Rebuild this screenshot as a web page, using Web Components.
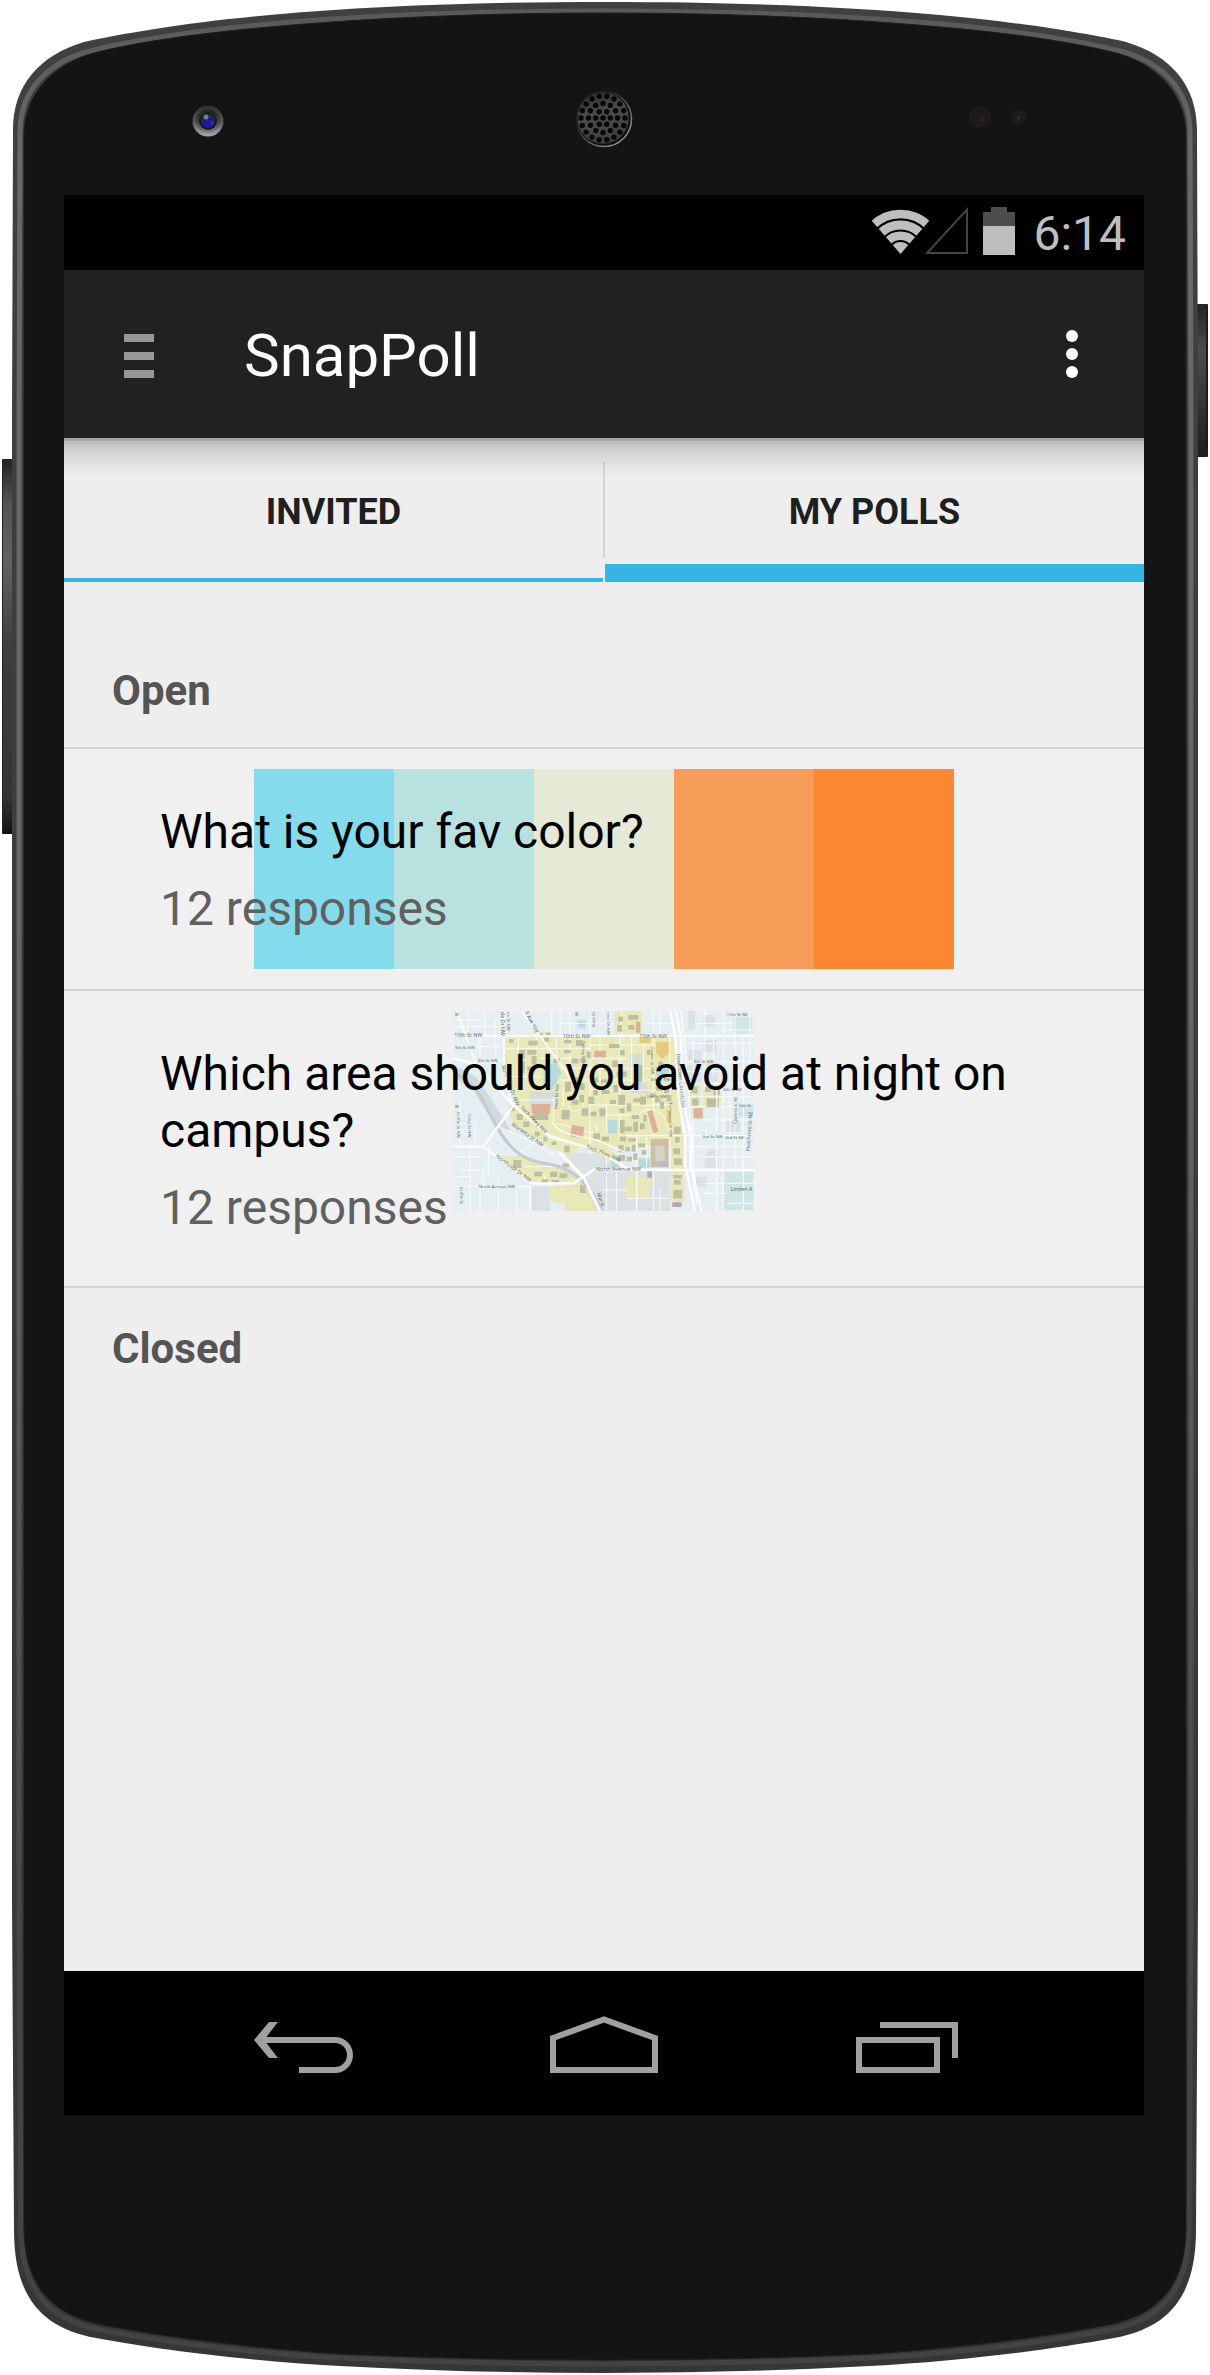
<!DOCTYPE html>
<html lang="en">
<head>
<meta charset="utf-8">
<meta name="viewport" content="width=device-width, initial-scale=1">
<title>SnapPoll</title>
<style>
html, body { margin: 0; background: #fff; }
body { font-family: Roboto, "Noto Sans", sans-serif; }
</style>
</head>
<body>
<phone-frame>
  <status-bar time="6:14"></status-bar>
  <action-bar>SnapPoll</action-bar>
  <tab-strip>
    <tab-item>INVITED</tab-item>
    <tab-item selected>MY POLLS</tab-item>
  </tab-strip>
  <poll-list>
    <poll-group heading="Open">
      <poll-card responses="12">What is your fav color?<color-strip slot="art"></color-strip></poll-card>
      <poll-card responses="12">Which area should you avoid at night on campus?<campus-map slot="art"></campus-map></poll-card>
    </poll-group>
    <poll-group heading="Closed"></poll-group>
  </poll-list>
  <nav-bar></nav-bar>
</phone-frame>

<script>
function define(name, html, setup) {
  customElements.define(name, class extends HTMLElement {
    constructor() {
      super();
      this.attachShadow({ mode: "open" }).innerHTML = html;
    }
    connectedCallback() { if (setup) setup(this, this.shadowRoot); }
  });
}

/* Phone body: bezel, camera, speaker, sensors, side keys */
define("phone-frame", `
<style>
:host { display: grid; grid-template-rows: 195px 1fr 260px; grid-template-columns: minmax(0, 1fr); min-height: 100vh; position: relative; isolation: isolate; }
.body { position: absolute; inset: 0; width: 100%; height: 100%; z-index: -1; }
.top { display: grid; grid-template-columns: 1fr auto 1fr; align-items: center; padding: 41px 182px 0 180px; height: 154px; }
.top svg { display: block; align-self: start; }
.camera, .sensors { margin-top: 64px; }
.speaker { margin-top: 48px; }
.sensors { justify-self: end; }
.screen { display: flex; flex-direction: column; margin: 0 66px 0 64px; background: #eee; min-width: 0; }
</style>
<svg class="body" viewBox="0 0 1210 2375" preserveAspectRatio="none" aria-hidden="true">
  <defs>
    <linearGradient id="rim" x1="0" y1="0" x2="0" y2="1">
      <stop offset="0" stop-color="#404042"/><stop offset=".85" stop-color="#38383a"/><stop offset="1" stop-color="#363637"/>
    </linearGradient>
    <linearGradient id="glint" x1="0" y1="0" x2="0" y2="1">
      <stop offset="0" stop-color="#59595d"/><stop offset=".06" stop-color="#68686c"/><stop offset=".4" stop-color="#67676b"/><stop offset=".85" stop-color="#454547"/><stop offset="1" stop-color="#434344"/>
    </linearGradient>
    <linearGradient id="key" x1="0" y1="0" x2="0" y2="1">
      <stop offset="0" stop-color="#222"/><stop offset=".12" stop-color="#555"/><stop offset=".28" stop-color="#626262"/><stop offset=".5" stop-color="#3e3e3e"/><stop offset=".9" stop-color="#343434"/><stop offset="1" stop-color="#111"/>
    </linearGradient>
    <linearGradient id="key2" x1="0" y1="0" x2="0" y2="1">
      <stop offset="0" stop-color="#222"/><stop offset=".3" stop-color="#4c4c4c"/><stop offset=".6" stop-color="#383838"/><stop offset="1" stop-color="#1c1c1c"/>
    </linearGradient>
  </defs>
  <rect x="2" y="459" width="12" height="375" rx="1" fill="url(#key)"/>
  <path d="M2.500 460V833" stroke="#222"/>
  <rect x="1196" y="304" width="12" height="153" rx="1" fill="url(#key2)"/>
  <path d="M1207 305V456" stroke="#1c1c1c" stroke-width="2"/>
  <path fill="url(#rim)" d="M605 2C480 2 370 6 270 15C190 22 120 34 84 42C40 55 13 85 13 130L12 420V1900L14 2230C14 2295 40 2328 96 2338C160 2350 250 2361 340 2366Q470 2373 605 2373Q740 2373 870 2366C960 2361 1050 2350 1114 2338C1170 2328 1196 2295 1196 2230L1198 1900V420L1197 130C1197 85 1170 55 1126 42C1090 34 1020 22 940 15C840 6 730 2 605 2Z"/>
  <path fill="none" stroke="url(#glint)" stroke-width="5" d="M605 11C480 11 370 15 270 24C190 31 125 42 94 50C48 61 20 90 20 132L19 420V1900L21 2228C21 2286 45 2319 100 2330C165 2342 250 2353 340 2358Q470 2364 605 2364Q740 2364 870 2358C960 2353 1045 2342 1110 2330C1165 2319 1189 2286 1189 2228L1191 1900V420L1190 132C1190 90 1162 61 1116 50C1085 42 1020 31 940 24C840 15 730 11 605 11Z"/>
  <path fill="#141414" stroke="#1d1d1e" stroke-width="1" d="M605 13C480 13 370 18 270 27C190 34 135 43 98 52C52 63 24 95 24 136V2226C24 2282 48 2314 102 2325C165 2337 250 2348 340 2354Q470 2360 605 2360Q740 2360 870 2354C960 2348 1045 2337 1108 2325C1162 2314 1186 2282 1186 2226V136C1186 95 1158 63 1112 52C1075 43 1020 34 940 27C840 18 730 13 605 13Z"/>
</svg>
<div class="top" aria-hidden="true">
  <svg class="camera" width="56" height="32" viewBox="-28 -16 56 32">
    <defs>
      <linearGradient id="ring" x1="0" y1="0" x2="0" y2="1"><stop offset="0" stop-color="#2c2c2c"/><stop offset=".5" stop-color="#555"/><stop offset="1" stop-color="#a8a8a8"/></linearGradient>
      <radialGradient id="lens" cx=".5" cy=".75" r=".7"><stop offset="0" stop-color="#1a0fe0"/><stop offset=".5" stop-color="#1a1a86"/><stop offset="1" stop-color="#24303c"/></radialGradient>
    </defs>
    <circle r="15.500" fill="url(#ring)"/><circle r="11.500" fill="#242424"/><circle r="11" cy="1" fill="url(#ring)" opacity=".7"/><circle r="9" fill="#1a1a1a"/><circle r="7" fill="url(#lens)"/><circle cx="-2" cy="-4" r="2.500" fill="#7fa09c" opacity=".75"/><circle cx="4" cy="2" r="2" fill="#7a3a7c" opacity=".5"/>
  </svg>
  <svg class="speaker" width="60" height="60" viewBox="-30 -30 60 60">
    <defs><linearGradient id="mesh" x1="0" y1="0" x2=".3" y2="1"><stop offset="0" stop-color="#2a2a2a"/><stop offset=".5" stop-color="#4c4c4c"/><stop offset="1" stop-color="#404040"/></linearGradient>
    <linearGradient id="lip" x1="0" y1="0" x2="1" y2="1"><stop offset=".3" stop-color="#222"/><stop offset=".8" stop-color="#8a8a8a"/></linearGradient></defs>
    <circle r="28" fill="#0c0c0c"/><circle r="27.500" fill="none" stroke="url(#lip)" stroke-width="1.500"/><circle cx="-1" cy="-1" r="26" fill="url(#mesh)" stroke="#1c1c1c"/>
    <g class="holes" fill="#070707"></g>
  </svg>
  <svg class="sensors" width="60" height="24" viewBox="0 0 60 24"><circle cx="12" cy="12" r="11" fill="#1b1b1b"/><circle cx="51" cy="12" r="8" fill="#1b1b1b"/><path d="M14 11l2 5h-3z" fill="#4a2a1c"/><path d="M51 9l1 5h-3z" fill="#4a2a1c"/></svg>
</div>
<div class="screen"><slot></slot></div>
`, (host, root) => {
  const pts = [[0, 0]];
  [[6, 7.3], [12, 14.5], [18, 22]].forEach(([n, r]) => {
    for (let i = 0; i < n; i++) {
      const a = 2 * Math.PI * i / n;
      pts.push([r * Math.cos(a), r * Math.sin(a)]);
    }
  });
  root.querySelector(".holes").innerHTML = pts.map(([x, y]) => `<circle cx="${(x - 1).toFixed(1)}" cy="${(y - 1).toFixed(1)}" r="2.700"/>`).join("");
});

define("status-bar", `
<style>
:host { display: flex; justify-content: flex-end; align-items: center; height: 75px; background: #000; color: #bebebe; padding-right: 18px; box-sizing: border-box; }
svg { display: block; margin-right: 17px; }
span { font-size: 48px; line-height: 56px; padding-top: 2px; }
</style>
<svg width="146" height="75" viewBox="870 195 146 75" role="img" aria-label="Wi-Fi, no mobile signal, battery">
  <defs><clipPath id="fan"><path d="M900.500 254L865 213V200H936V213Z"/></clipPath></defs>
  <g clip-path="url(#fan)" fill="none" stroke="#bebebe">
    <circle cx="900.500" cy="253.500" r="39.500" stroke-width="8.500"/>
    <circle cx="900.500" cy="253.500" r="28.500" stroke-width="9"/>
    <circle cx="900.500" cy="253.500" r="17.800" stroke-width="8.500"/>
    <circle cx="900.500" cy="253.500" r="5.700" stroke-width="11.500"/>
  </g>
  <path d="M927 253H967V209.500Z" fill="none" stroke="#444" stroke-width="2"/>
  <path d="M983 212h8v-5h16v5h8v14h-32z" fill="#4d4d4d"/>
  <path d="M983 226h32v29h-32z" fill="#bebebe"/>
</svg>
<span></span>
`, (host, root) => { root.querySelector("span").textContent = host.getAttribute("time"); });

define("action-bar", `
<style>
:host { display: flex; align-items: center; height: 168px; background: #212121; color: #fff; position: relative; z-index: 1; }
:host::after { content: ""; position: absolute; left: 0; right: 0; top: 100%; height: 40px; pointer-events: none;
  background: linear-gradient(rgba(0,0,0,.3) 0 3px, rgba(0,0,0,.22) 3px, rgba(0,0,0,.13) 11px, rgba(0,0,0,.07) 22px, rgba(0,0,0,.02) 33px, transparent); }
button { all: unset; display: grid; place-items: center; box-sizing: border-box; height: 168px; }
.menu { width: 150px; padding-top: 4px; }
.more { width: 144px; }
svg { display: block; }
h1 { flex: 1; margin: 0 0 0 30px; padding-top: 4px; font-size: 60px; line-height: 70px; font-weight: 400; }
</style>
<button class="menu" aria-label="Open menu"><svg width="30" height="44" viewBox="0 0 30 44" fill="#979797"><path d="M0 0h30v8H0zM0 18h30v8H0zM0 36h30v8H0z"/></svg></button>
<h1><slot></slot></h1>
<button class="more" aria-label="More options"><svg width="12" height="48" viewBox="0 0 12 48" fill="#fff"><circle cx="6" cy="6" r="6"/><circle cx="6" cy="24" r="6"/><circle cx="6" cy="42" r="6"/></svg></button>
`);

define("tab-strip", `
<style>
:host { display: flex; gap: 2px; background: linear-gradient(#d5d5d5, #d5d5d5) center 24px / 2px 96px no-repeat #eee; }
</style>
<slot></slot>
`, host => host.setAttribute("role", "tablist"));

define("tab-item", `
<style>
:host { display: block; flex: 1; min-width: 0; }
button { all: unset; display: grid; place-items: center; box-sizing: border-box; width: 100%; height: 144px; padding-top: 4px; color: #1f1f1f; font-size: 36px; line-height: 42px; font-weight: 700; background: linear-gradient(#33b5e5, #33b5e5) bottom / 100% 4px no-repeat; }
:host([selected]) button { background-size: 100% 18px; }
</style>
<button role="tab"><slot></slot></button>
`, (host, root) => root.querySelector("button").setAttribute("aria-selected", host.hasAttribute("selected")));

define("poll-list", `
<style>:host { display: block; flex: 1; padding-top: 48px; background: #eee; }</style>
<slot></slot>
`);

define("poll-group", `
<style>
:host { display: block; }
h2 { margin: 0; padding: 36px 48px 31px; font-size: 42px; line-height: 50px; font-weight: 700; color: #555; }
</style>
<h2></h2><slot></slot>
`, (host, root) => { root.querySelector("h2").textContent = host.getAttribute("heading"); });

/* A poll row: artwork lies behind the question and the response count */
define("poll-card", `
<style>
:host { display: block; border-top: 2px solid #d3d3d3; background: #f0f0f0; }
:host(:last-of-type) { border-bottom: 2px solid #d3d3d3; }
a { display: grid; min-height: 240px; color: #000; text-decoration: none; font-size: 48px; line-height: 57px; }
.art { grid-area: 1 / 1; justify-self: center; padding-top: 20px; }
.text { grid-area: 1 / 1; padding: 54px 96px 50px; position: relative; display: flex; flex-direction: column; gap: 20px; }
.count { color: #606060; }
</style>
<a href="#poll"><div class="art"><slot name="art"></slot></div><div class="text"><span><slot></slot></span><span class="count"></span></div></a>
`, (host, root) => { root.querySelector(".count").textContent = host.getAttribute("responses") + " responses"; });

define("color-strip", `
<style>
:host { display: flex; width: 700px; max-width: 100%; height: 200px; }
i { flex: 1; }
</style>
<i style="background:#84dbeb"></i><i style="background:#b8e2e0"></i><i style="background:#e5e9d5"></i><i style="background:#f69d5a"></i><i style="background:#fd8731"></i>
`);

/* Street map of the campus */
define("campus-map", `
<style>
:host { display: block; }
svg { display: block; width: 300px; height: 200px; }
text { font-family: "Open Sans", Roboto, sans-serif; font-size: 16px; fill: #55646a; }
.minor { font-size: 13px; }
</style>
<svg viewBox="42 63 900 600" aria-label="Campus map">
  <rect x="42" y="63" width="900" height="600" fill="#e5eef0"/>
  <g fill="#dbe2e4">
    <path d="M360 470L430 560L470 663H690V545L540 535L500 490L400 490ZM275 590H330V663H275Z"/>
    <path d="M42 225L110 262L200 400L215 425L160 400L100 300L42 262Z" fill="#d2dadc"/>
    <path d="M745 63h20v55h-20zM790 150h40v35h-40zM745 180h40v30h-40zM795 215h40v60h-40zM740 225h45v55h-45zM795 505h40v28h-40zM765 560h35v30h-35zM800 480h35v20h-35zM790 75h35v35h-35zM860 390h40v35h-40z"/>
  </g>
  <g fill="#d0e5e6">
    <path d="M880 80h55v50h-55zM895 345h45v35h-45zM850 545h90v115h-90zM410 88h30v30h-30z"/>
  </g>
  <g fill="#e8e9b6">
    <path d="M192 138H300L296 126H335V138H700L712 200L725 350L735 430V545H733V636H692V470H500L540 500L536 535C480 490 420 470 330 430L240 355L225 320L205 280L192 230Z"/>
    <path d="M525 63H605V132H525ZM205 345L240 345L330 440L420 470L400 495L350 480L260 430L215 395Z"/>
    <path d="M180 500L240 495L330 525L400 545L420 560L400 580H290L230 545ZM330 590L430 580L455 610L468 663H375V640H345L325 620ZM558 560H628V620H558Z"/>
    <path d="M750 285h32v70h-32zM790 285h52v70h-52zM752 352h38v35h-38zM695 470h40v70h-40z"/>
  </g>
  <g fill="#d8dcd8"><path d="M570 190h40v45h-40zM270 305h80v50h-80zM590 250q25 10 40 60h-60z"/></g>
  <g fill="#b9dadd"><path d="M310 235L345 215L365 250L335 300L312 290ZM503 390h28v40h-28zM648 232h40v26h-40zM415 92h20v20h-20zM512 505h28v28h-28zM595 505h35v28h-35z"/></g>
  <g class="streets" fill="none" stroke="#fff"></g>
  <g class="buildings" fill="#bcbfa2"></g>
  <g fill="#dcb09a"><path d="M588 95h13v33h-13zM463 182h35v20h-35zM275 342h55v28h-55zM395 405l38 6-4 34-38-6zM622 365l15-5 18 65-15 5zM760 355h28v30h-28zM235 215h18v35h-18z"/></g>
  <path d="M632 447h54v85h-54z" fill="#cdbfa6"/><path d="M646 468h28v46h-28z" fill="#d5d4c6"/><path d="M650 514h30v16h-30z" fill="#b7bcc8"/>
  <path d="M697 637h28v14h-28zM622 543h14v20h-14z" fill="#bca3b4"/>
  <g fill="#e3cb7c"><path d="M598 143h34v17h-34zM648 155h38v35l-18 18-20-18z"/><path d="M680 360h12v40h-12z"/></g>
  <g fill="none">
    <path d="M42 250C110 270 130 340 170 410C215 490 260 515 330 523C400 535 450 580 486 663" stroke="#c6c9d0" stroke-width="9"/>
    <path d="M470 663C440 590 410 555 345 533" stroke="#d2d5da" stroke-width="3"/>
    <g stroke="#fff" stroke-linecap="round">
      <path d="M42 205L110 225L215 340L330 440L470 480L560 535" stroke-width="7"/>
      <path d="M42 470H130L225 340M130 470L170 500L275 580H400L460 540H942" stroke-width="7"/>
      <path d="M42 138H942M192 63V230L215 340M50 63L110 225M245 63L300 138L375 240L410 300" stroke-width="5"/>
      <path d="M690 63L706 138L716 330L735 440V520L765 663M708 63L722 138L730 330L752 440V530L785 663" stroke-width="7"/>
      <path d="M724 63L745 300L770 640M340 400C355 430 400 435 470 450L550 485" stroke-width="4"/>
      <path d="M560 437H942M830 300V663M270 663V590M590 545V663" stroke-width="4"/>
      <path d="M360 490L430 560L480 663" stroke-width="8"/>
    </g>
  </g>
  <g class="labels"></g>
</svg>
`, (host, root) => {
  const minor = "M42 170H190M42 210H190M42 110H190M85 63V138M135 63V138M165 90V200M42 90H120M120 138V200" +
    "M60 330V470M105 400V460M42 500H130M90 470V663M60 540H130V600M42 590H275M120 590V663M175 560V663M230 600V663M42 560H95" +
    "M145 470V560M390 63V138M450 63V500M510 63V130M545 63V138M360 63V138M335 63V138M640 63V138M660 63V138M365 100H520M620 100H700" +
    "M235 138V250M290 138V230M350 138V200M390 138V240M480 138V270M540 138V440M575 138V300M610 138V280M640 138V440M690 140V540" +
    "M192 175H450M450 165H690M300 205H560M360 235H640M360 270H690M450 300H690M192 260H300M240 330H350M340 320V400M370 290V350" +
    "M385 345C385 370 430 370 430 340M450 345H690M460 375H600M470 400V450M500 340V430M600 370C640 340 680 370 690 430M560 470H640M590 440V540M620 440V530" +
    "M200 420L300 470L350 500M220 500L280 460L330 440M250 530H400M300 540L330 590M350 400L460 430M500 500V660M530 540V663M490 600H560" +
    "M745 160H942M760 138V660M795 63V300M820 138V260M850 63V663M885 63V540M910 138V663M740 215H942M740 245H850M745 280H942M745 320H942M745 350H890M790 390H942M740 470H942M780 500H942M790 580H942M790 610H860M860 640H942M770 100H880M850 120H942M930 63V300M800 410V440M870 300V440" +
    "M560 625H690M640 545V663M660 600V663";
  root.querySelector(".streets").innerHTML = `<path stroke-width="2.500" d="${minor}"/>`;

  const b = [[207,147,14,11],[265,152,28,14],[312,143,16,12],[295,130,14,8],[318,128,14,8],[372,150,22,10],[408,150,18,18],[372,180,20,10],
    [237,180,18,26],[262,180,28,14],[275,198,15,25],[240,215,14,28],[262,230,25,12],[340,205,20,14],[395,205,20,15],[420,205,18,12],[440,185,12,20],
    [507,162,32,12],[517,212,16,20],[492,225,14,18],[530,245,30,16],[535,80,14,14],[532,105,14,20],[565,75,30,14],[565,105,18,14],
    [582,225,25,50],[540,180,14,16],[620,180,12,14],[648,290,20,12],[672,290,16,20],[630,310,16,12],[680,315,14,20],[645,325,16,12],
    [375,275,18,30],[398,262,16,22],[420,280,14,20],[455,262,20,16],[483,268,20,12],[460,300,14,16],[485,300,24,12],[520,285,14,22],[545,285,20,14],
    [365,360,24,28],[395,330,20,14],[418,315,14,22],[425,355,20,22],[445,320,18,22],[478,355,18,24],[452,365,18,14],[510,330,18,12],[535,315,20,30],[538,355,16,14],[560,340,14,24],[580,325,20,12],[600,320,18,24],
    [540,390,14,40],[555,410,20,14],[575,375,22,12],[580,395,14,30],[600,400,14,18],[610,375,10,20],[460,430,20,18],[485,440,22,14],[540,440,18,14],[565,445,22,10],
    [535,465,16,22],[556,470,14,14],[575,465,12,20],[595,460,20,12],[535,495,20,18],[560,500,16,14],[580,490,12,20],[605,480,14,14],
    [210,350,14,14],[230,372,18,18],[250,395,18,16],[335,455,14,10],[373,467,16,20],[285,425,14,14],[310,440,12,14],
    [220,510,24,24],[283,545,24,14],[330,545,22,16],[358,550,24,14],[305,568,20,10],[335,570,22,10],[420,585,18,24],[368,520,20,12],
    [702,410,20,22],[705,440,14,18],[700,475,20,18],[702,505,24,20],[700,555,26,10],[702,570,20,14],[700,600,26,25],
    [755,290,18,20],[757,325,18,22],[795,290,18,16],[820,290,20,26],[800,325,36,26],[660,335,12,22],[280,355,45,35],[655,215,14,16]];
  root.querySelector(".buildings").innerHTML = b.map(([x, y, w, h]) => `<rect x="${x}" y="${y}" width="${w}" height="${h}"/>`).join("");

  /* text, x, y, rotation, and a mark for the small street names */
  const labels = [["10th St NW",43,142,0],["10th St NW",368,144,0],["10th St NW",598,143,0],["9th St NW",44,178,0,1],["8th St NW",113,216,0,1],
    ["W",44,354,0,1],["W",44,78,0,1],["11th St NE",860,77,0,1],["8th St NW",761,220,0,1],["3rd St NW",787,443,0,1],["3rd St NE",856,447,0,1],
    ["5th St NW",621,323,0,1],["6th St NW",632,274,0,1],["5th St",898,350,0,1],["6th St NE",850,302,0,1],
    ["North Avenue NW",468,543,0],["North Avenue NW",116,594,0,1],["Linden A",872,604,0],
    ["de Dr NW",182,66,90],["on St NW",201,66,90,1],["ll Ave NW",254,68,62],["State St",466,112,-90,1],["nter Dr NW",500,66,90,1],["W",406,66,90,1],
    ["Northside Dr NW",184,228,70],["Tech Pkwy NW",240,354,46],["Marietta St NW",213,406,35],["Northside Dr NW",166,502,36],
    ["Tech Pkwy NW",438,474,22],["Marie",470,610,70],["Griffin St NW",51,365,90,1],["Echo St NW",85,373,90,1],["Griffin St",60,590,90,1],
    ["Dalney St NW",427,152,90,1],["Fowler St NW",633,172,90,1],["Techwood Dr NW",686,336,90,1],["Downtown Connector",709,192,84],
    ["Ferst Dr NW",353,356,-87,1],["Cypress St NE",889,402,-88,1],["Peachtree St NE",929,484,-86]];
  root.querySelector(".labels").innerHTML = labels.map(([t, x, y, r, small]) =>
    `<text${small ? ' class="minor"' : ""} transform="translate(${x} ${y}) rotate(${r})">${t}</text>`).join("");
});

define("nav-bar", `
<style>
:host { display: flex; height: 144px; padding: 0 90px; background: #000; }
button { all: unset; flex: 1; display: grid; place-items: center; }
svg { display: block; fill: none; stroke: #a0a0a0; stroke-width: 6; }
</style>
<button aria-label="Back"><svg width="108" height="64" viewBox="250 2011 108 64"><path d="M299 2070H335A15 15 0 0 0 335 2040H260"/><path d="M269 2022H278L264 2040L278 2058H269L254 2040Z" fill="#a0a0a0" stroke="none"/></svg></button>
<button aria-label="Home"><svg width="108" height="64" viewBox="550 2011 108 64"><path d="M553 2070V2038L604 2019.500L655 2038V2070Z"/></svg></button>
<button aria-label="Recent apps"><svg width="108" height="64" viewBox="850 2011 108 64"><path d="M859 2040H937V2070H859ZM880 2025H955V2058"/></svg></button>
`);
</script>
</body>
</html>
